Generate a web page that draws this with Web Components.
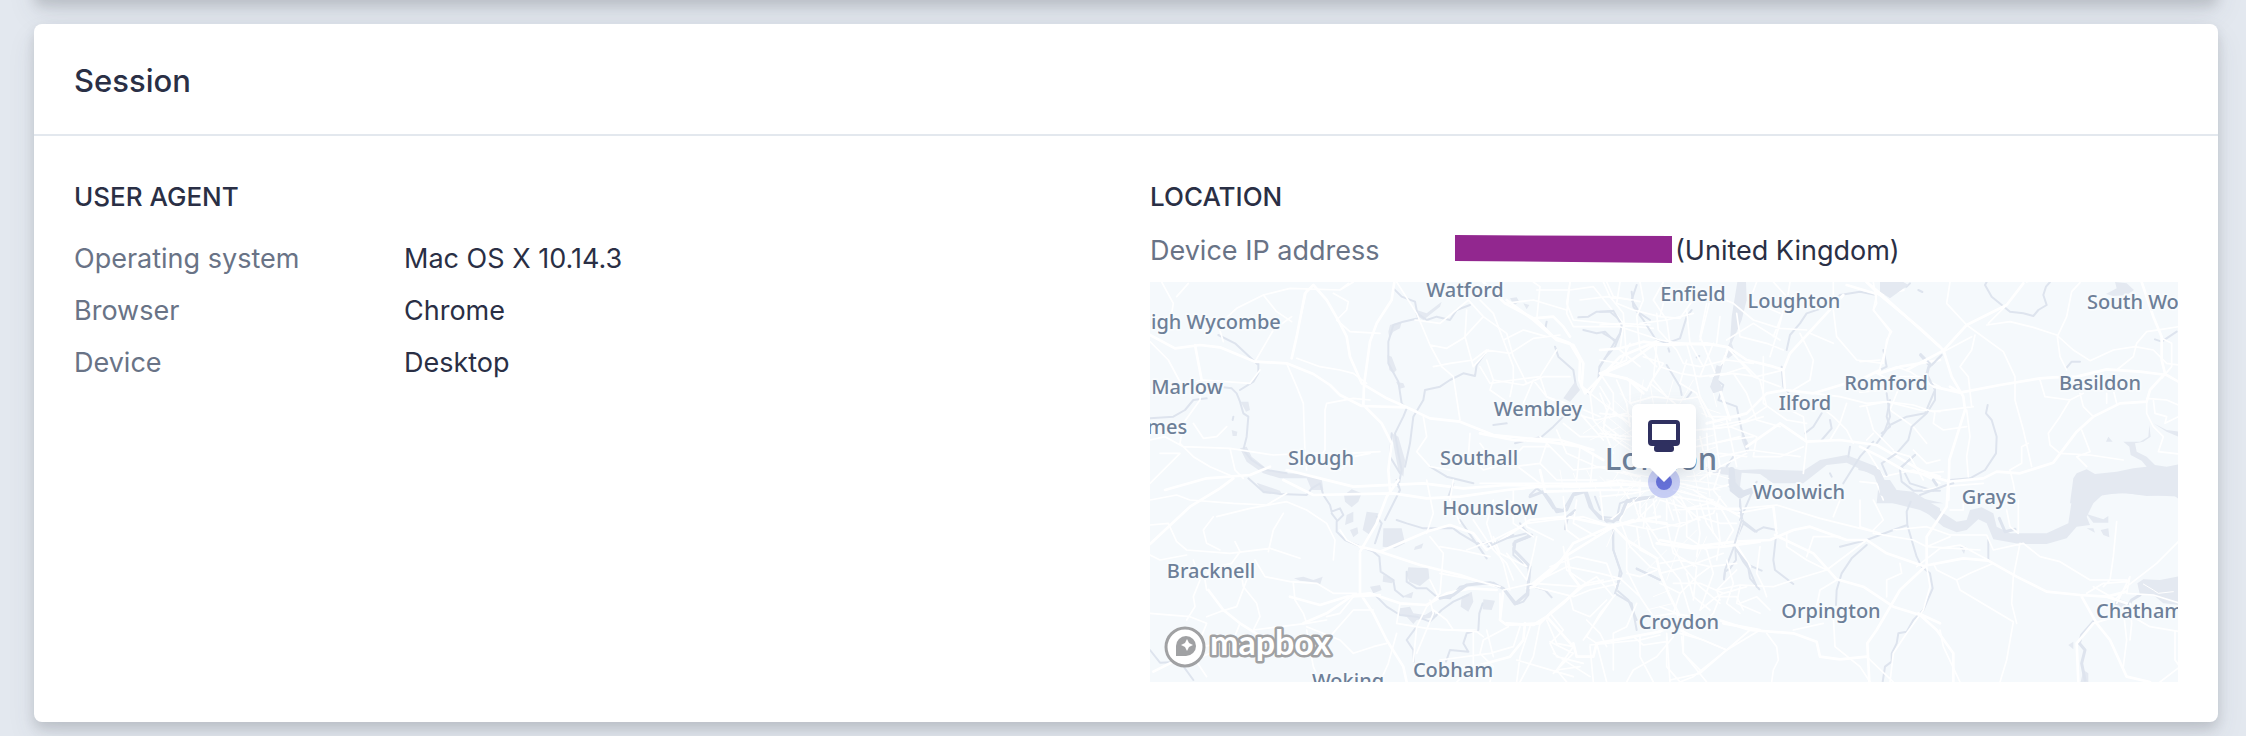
<!DOCTYPE html>
<html lang="en">
<head>
<meta charset="utf-8">
<title>Session</title>
<style>
  html { background: #e3e8ef; }
  body {
    margin: 0;
    min-height: 100vh;
    box-sizing: border-box;
    padding: 0 28px 14px 34px;
    overflow: hidden;
    background: #e3e8ef;
    color: #2a2f45;
    font-family: Inter, "Liberation Sans", sans-serif;
    font-size: 27px;
  }
</style>
</head>
<body>
<panel-card class="previous" tail></panel-card>
<panel-card>
  <h2 slot="title">Session</h2>
  <detail-section heading="User agent">
    <detail-row label="Operating system">Mac OS X 10.14.3</detail-row>
    <detail-row label="Browser">Chrome</detail-row>
    <detail-row label="Device">Desktop</detail-row>
  </detail-section>
  <detail-section heading="Location" compact>
    <detail-row label="Device IP address"><redacted-value></redacted-value>(United Kingdom)</detail-row>
    <location-map slot="media"></location-map>
  </detail-section>
</panel-card>

<script>
function define(name, html, setup) {
  const template = document.createElement('template');
  template.innerHTML = html;
  customElements.define(name, class extends HTMLElement {
    constructor() {
      super();
      this.attachShadow({ mode: 'open' }).append(template.content.cloneNode(true));
    }
    connectedCallback() {
      if (setup) setup(this, this.shadowRoot);
    }
  });
}

define('panel-card', `
<style>
  :host {
    display: block;
    background: #fff;
    border-radius: 8px;
    box-shadow: 0 14px 28px rgba(60, 66, 87, .1), 0 6px 12px rgba(0, 0, 0, .12);
  }
  /* Foot of the card scrolled out above the window */
  :host([tail]) { height: 80px; margin: -80px 0 24px; }
  :host([tail]) > * { display: none; }
  header { padding: 37px 40px 33px; border-bottom: 2px solid #e3e8ee; }
  ::slotted(h2) { margin: 0; font-size: 31px; line-height: 40px; font-weight: 500; }
  .body {
    display: grid;
    grid-template-columns: repeat(2, minmax(0, 1fr));
    gap: 48px;
    padding: 41px 40px 40px;
  }
</style>
<header><slot name="title"></slot></header>
<div class="body"><slot></slot></div>`);

define('detail-section', `
<style>
  :host { display: block; --label-width: 330px; --row-height: 52px; }
  :host([compact]) { --label-width: 304px; --row-height: 40px; }
  h3 {
    margin: 0 0 16px;
    font-size: 26px;
    line-height: 40px;
    font-weight: 500;
    text-transform: uppercase;
  }
  :host([compact]) h3 { margin-bottom: 14px; }
  dl { margin: 0; }
  ::slotted([slot="media"]) { margin-top: 11px; }
</style>
<h3></h3>
<dl><slot></slot></dl>
<slot name="media"></slot>`, (host, root) => {
  root.querySelector('h3').textContent = host.getAttribute('heading');
});

define('detail-row', `
<style>
  :host { display: flex; line-height: var(--row-height); }
  dt { flex: none; width: var(--label-width); color: #697386; }
  dd { margin: 0; display: flex; align-items: center; white-space: nowrap; }
</style>
<dt></dt>
<dd><slot></slot></dd>`, (host, root) => {
  root.querySelector('dt').textContent = host.getAttribute('label');
});

define('redacted-value', `
<style>
  :host { display: block; width: 219px; height: 28px; margin: 0 2px 4px 0; }
  svg { display: block; width: 100%; height: 100%; }
</style>
<svg viewBox="0 0 220 28" aria-hidden="true"><path fill="#92278f" d="M1 0 219 1V28L1 26Z"/></svg>`);

define('location-map', `
<style>
  :host { display: block; height: 400px; background: #f5f9fc; overflow: hidden; }
  svg { display: block; width: 100%; height: 100%; }
  .area { fill: #e4e9f1; stroke: none; }
  .river, .minor, .major, .fine { fill: none; stroke-linejoin: round; stroke-linecap: round; }
  .river { stroke: #dee4ee; stroke-width: 6; }
  .fine { stroke: #fff; stroke-width: 3; }
  .minor { stroke: #fff; stroke-width: 5; }
  .major { stroke: #fff; stroke-width: 8; }
  .places text {
    font: 500 20px "Noto Sans", "Open Sans", sans-serif;
    fill: #6d7f98;
    stroke: #f8fbfd;
    stroke-width: 4px;
    stroke-linejoin: round;
    paint-order: stroke;
  }
  .places .city { font-size: 31px; }
  .places .mid { text-anchor: middle; }
  .brand { font: 700 34px Lato, sans-serif; fill: #fff; stroke: #a0a1a3; stroke-width: 5px; stroke-linejoin: round; paint-order: stroke; }
  .bubble { filter: drop-shadow(0 4px 8px rgba(60, 66, 87, .14)); }
</style>
<svg viewBox="0 0 1028 400" preserveAspectRatio="xMidYMid slice" role="group" aria-label="Map of London">
  <svg width="1028" height="400" viewBox="0 0 3084 1200" aria-hidden="true">
    <!-- North-west: Wycombe, Slough, Watford -->
    <g transform="translate(-30 -36)">
      <path class="area" d="M742 255 755 260 770 300 760 310 748 300ZM768 335 790 340 795 352 780 356ZM745 185 750 165 785 155 780 175 760 185 748 205ZM1110 85 1130 82 1138 95 1122 106ZM275 480 292 485 290 498 278 498ZM830 120 860 130 905 95 900 110 850 150 835 140ZM302 395 325 395 330 420 318 425ZM300 535 320 530 335 560 385 600 440 610 500 612 545 625 550 660 515 660 500 625 420 625 370 610 320 575ZM1150 100 1168 105 1160 118ZM755 490 775 500 795 570 790 620 775 600 765 550Z"/>
      <path class="river" d="M760 55 785 80 825 95 832 130 860 150 890 140 930 150 950 120 990 105M830 130 835 145 790 155 760 165 745 215 745 280 775 335 785 400 800 415 790 440 765 490 775 550 785 600 775 650M850 390 820 440 810 520 795 590M850 390 855 360 900 350 930 330 970 310 1005 318 1010 285 1035 250M30 445 100 440 135 420 160 390 200 385M250 352 275 355 290 370 300 395 310 430 325 440 320 500 310 540 335 570 380 600 440 610M355 280 355 310 340 335 300 360M235 195 285 220 355 285M1315 142 1345 140 1370 125 1410 125 1440 150 1445 180 1425 230 1395 265 1378 290 1375 330 1345 370M1330 180 1370 190 1395 185 1425 215M1245 230 1255 260 1300 300 1308 350M1220 155 1215 180M1490 45 1475 90 1500 130 1530 150M755 490 750 560 780 610M1060 465 1100 460M1125 520 1205 500 1240 470 1270 440M280 440 278 450M870 590 920 620 1000 640"/>
      <path class="major" d="M763 36 755 90 710 160 690 215 672 345 670 405M30 195 105 235 180 225 240 232 345 275 440 280 520 312 570 345 600 375 665 408 800 412 870 445 960 455 1060 495 1160 505 1260 510 1360 540M455 265 470 200 495 70 520 45 560 90 600 160 620 200 630 260 665 340 740 385 830 425M75 660 200 625 330 615 390 590M1030 36 1095 100 1190 150 1240 200 1290 220 1320 270 1318 330 1335 370 1440 260 1560 210M670 405 725 460 755 520 745 600 750 660M440 600 540 625 640 650 850 640 970 655 1100 645 1300 650 1560 640M165 225 185 330"/>
      <path class="minor" d="M65 36 100 100 95 130M250 215 235 165 290 115 370 75 450 55 600 60 625 40M370 75 410 125 455 155M110 80 145 40M580 70 625 95 620 120 590 150 630 185 720 190M30 215 85 270 125 345 190 330 330 340 360 300M185 330 180 390 130 460 120 520 160 560 210 590 280 620M160 460 190 505 230 500 260 470M30 510 75 500 130 530 270 535 400 555 500 550 620 550 720 545M270 535 285 600 310 625M440 280 470 350 490 400 495 550 500 600M555 420 560 400 640 385 690 390M555 420 555 540 520 590M470 265 540 290 600 300 640 310 680 340M345 275 400 180 455 140M770 36 830 130 870 225 905 290 940 320 960 450M825 150 900 160 985 90 1030 140 1100 190 1120 260 1160 340M870 225 920 235 970 205 1030 140M880 290 930 280 1000 270 1040 240 1110 250M980 120 975 200 1000 290 1045 240M1040 270 1060 330 1050 360 1100 395M1060 330 1150 345 1210 320 1290 320M1110 250 1180 205 1260 195M1190 150 1200 50 1180 36M1290 36 1280 100 1300 150 1400 160 1540 175M1190 60 1290 60 1360 50 1400 100 1450 160 1440 240 1500 290M1095 100 1180 90 1280 120M1150 400 1180 330 1220 380 1310 410 1380 440M1380 370 1400 420 1390 480 1440 520 1500 560M850 440 860 500 830 545 870 590 930 600M990 490 985 560 1030 600 1100 580 1150 530 1230 530M1020 520 1050 560 1120 580 1200 640M640 36 600 60M500 60 480 150M1400 36 1420 80 1500 95M60 550 120 550 30 640M600 600 640 560 690 550M1200 500 1260 560 1300 600 1400 590 1500 620"/>
    </g>
    <!-- South-west: Windsor, Bracknell, Woking, Heathrow -->
    <g transform="translate(-30 594)">
      <path class="area" d="M612 45 635 28 665 40 655 65 635 82 615 65ZM680 95 715 100 700 150 690 165 668 150ZM730 145 785 145 795 190 765 205 728 200ZM805 262 865 265 868 295 840 318 808 305 800 285ZM965 350 995 335 1000 365 985 395 962 380ZM1030 358 1065 362 1055 390 1028 388ZM462 295 490 290 520 300 548 290 540 315 510 305 480 302ZM620 105 640 95 640 125 615 135ZM630 150 652 142 655 160 640 172ZM780 385 810 380 820 400 855 405 880 390 890 410 830 420 820 432 800 410 775 405ZM690 320 720 315 725 330 700 340ZM730 285 765 300 755 310 728 305ZM825 200 850 190 845 205 822 210ZM350 8 420 32 425 42 370 40ZM785 350 820 335 815 355Z"/>
      <path class="river" d="M325 -5 370 35 420 42 500 45 515 25 540 10 550 45 570 75 575 95 600 85 610 105 590 125 590 155 615 180 650 195 700 215 718 230 722 275 760 300 765 330 790 350M575 100 590 120M800 275 800 305 830 325 860 325 890 350 930 355 960 320 1010 310 1060 308 1095 330 1130 372 1150 365 1165 345 1168 290 1165 265 1120 225 1120 190 1170 170 1140 130M1165 315 1215 330 1235 352M770 120 800 130 850 145 940 145 960 160 1010 190 1060 190 1120 165M710 110 725 130 705 190M710 350 740 380 780 405 830 410 870 425 905 390 940 365 985 345M1028 370 1018 400 1015 450 980 460 970 490 985 515 930 510 918 545M830 440 800 480 820 510 822 545M1170 45 1190 25 1210 40 1240 85 1270 90 1300 40 1340 35 1360 90 1400 125 1435 120 1460 60 1530 50M1275 145 1285 110 1305 95M1418 160 1420 210 1440 270 1430 330 1465 360 1490 420M1490 265 1560 300M30 510 60 548 120 545 160 600M770 0 780 30 735 120M940 10 925 50M960 120 1040 235M1380 90 1365 50"/>
      <path class="major" d="M30 192 150 80 240 25 280 -5M660 220 660 340 700 400 740 480 790 560 800 606M660 215 710 130 740 50 775 0M660 200 720 215 840 255 960 285 1020 305 1090 325M450 350 540 375 620 350 720 345M490 430 560 400 640 345 690 340 780 370 860 375 920 340 990 325 1070 330M430 0 520 45 760 40 860 55 960 50 1100 30 1200 20 1400 10 1560 20M720 215 860 155 930 135 1000 160 1040 210 1170 120 1280 110 1420 140M1160 325 1180 320 1250 260 1300 190 1420 135 1560 110M205 330 250 390 300 430 380 480M1090 330 1080 420 1100 435 1200 430 1230 400 1290 350 1340 310M190 500 40 575M1000 560 1110 530 1150 480 1155 430"/>
      <path class="minor" d="M30 60 110 45 150 60 280 70 380 75 440 40M30 135 85 130 110 185 140 210 270 220 390 205 480 235M220 110 190 150 200 190 240 210M230 110 330 85 440 65 500 90 560 130 585 180 580 240M430 100 400 150 385 215M30 225 60 240 140 225M285 185 300 215 275 250 210 265 195 300 200 330M345 240 375 290 450 305 530 310 580 340 650 340M160 240 180 300 160 350 165 380 140 420M300 255 310 320 350 370 360 410 340 450M460 310 465 360 490 400 500 430M30 400 150 410 200 430M200 410 240 395 290 380 320 300M200 430 160 530 200 590M160 540 260 500 380 475 500 480 560 500M340 450 500 430 560 420M500 450 520 560 540 606M640 520 600 480 500 440M640 520 700 500 740 490M700 390 640 390 570 470M770 430 860 445 1010 455 1030 470M770 430 780 370M770 460 745 550 720 606M880 390 920 420 940 450M820 545 830 440 860 380 900 340 910 220 870 170M640 350 600 400 560 410M870 360 880 400 830 520M1000 455 1000 560 950 606M1105 440 1030 480 1020 520 1060 560 1050 606M870 300 895 350M900 200 960 210 1050 230M1120 200 1160 260 1080 220 1060 170M1060 60 1040 130 1060 190 1090 250 1110 330M1100 60 1150 80 1160 140 1240 180M1270 200 1280 270 1340 310 1390 300M1310 60 1300 130 1370 170 1420 140M1230 260 1310 230 1400 250 1430 330M1180 320 1300 350 1350 330 1440 310M1290 350 1300 390 1350 410 1400 360M1230 400 1270 450 1230 490 1250 530 1330 550M1200 430 1180 530 1140 606M1350 500 1360 606M1350 495 1500 480 1560 465M1340 420 1380 460 1400 500M600 150 620 180 660 200M860 0 880 100 860 160M940 0 930 60 960 130M1430 0 1470 60 1440 120 1470 200 1530 260 1560 270M1500 0 1500 100 1560 190M1440 130 1540 150M1240 520 1350 590M300 430 280 480 190 500"/>
    </g>
    <!-- North-east: Enfield, Romford, Thames -->
    <g transform="translate(1350 -36)">
      <path class="area" d="M412 36 438 36 440 90 425 150 395 220 405 250 385 265 372 255 390 215 395 140ZM350 285 362 290 350 330 345 370 332 350ZM320 590 385 592 420 600 480 598 610 602 660 570 740 555 830 590 845 660 880 665 960 680 1020 715 1020 750 960 720 840 690 830 620 740 578 680 585 610 640 520 640 480 612 425 608 420 650 440 668 420 680 385 650 385 615 320 608ZM425 480 445 520 440 550 425 510Z"/>
      <path class="river" d="M95 65 100 110 130 150 165 205 200 220 240 205 260 140 275 120M0 125 40 122 65 165 60 190 30 240 0 290M10 190 45 210M205 235 208 245M200 285 240 350 245 375M275 365 260 385M290 262 298 258M350 330 370 345 355 390 410 410 425 480 445 540M560 240 570 195 600 160 620 130 680 110 720 75 780 65 830 75 880 70 890 45 920 50 930 40M960 255 990 290 1020 260M830 520 870 465 920 440 975 430 1005 360 980 310 985 290M850 240 860 290 830 305M665 430 640 470 615 490M690 450 695 475 665 510M870 390 860 440 870 470 845 490M545 290 550 350 570 375M820 515 780 560 730 640M945 555 905 590 930 640 1000 662M690 610 695 620M0 740 50 745 60 700 100 685 160 680M470 635 420 750M400 560 380 590M750 530 745 560"/>
      <path class="major" d="M0 240 60 235 130 215 200 225 320 220 385 232 440 270 520 290 550 300 555 360 640 370 740 340M550 300 570 250 680 130 730 75M740 45 840 75 960 175 1020 230M800 36 840 75 910 60M840 310 900 290 1020 270M440 530 540 460 620 515 720 510 830 525 900 565 960 600 1020 620M385 232 350 330 390 450M555 360 500 370 440 430 320 460M840 300 780 330 740 345M0 310 80 325 130 370"/>
      <path class="minor" d="M60 36 50 100 100 120 180 140 240 145 300 60 400 100 460 150 540 175 620 180M520 36 560 80 540 160 510 260M570 36 560 100 520 200M700 36 700 120 710 200 770 270 850 280 860 210 875 185 820 120 830 75M600 190 640 270 630 330 580 360M630 190 700 220M170 130 175 180 230 240 250 280 300 290 380 270 460 280M260 120 270 220 310 290M320 100 300 200 350 320M360 140 350 220M410 130 420 200 500 220 550 240M330 320 400 310 470 320 550 300M400 310 440 370 470 450 540 470M490 260 490 400 560 450 620 460M560 370 570 420 610 440 620 520 610 610M640 370 720 380 800 400 860 395 960 420 1020 425M660 410 700 440 740 480 760 520M740 400 720 460 690 510M830 310 900 345 870 420 940 470 980 520M120 36 130 90 110 140 120 240 170 290M200 60 180 140M0 165 65 160 150 165M0 270 60 280 90 220M130 260 190 280 150 340 200 380M260 270 240 340 290 370 320 440M300 380 330 440 420 440M310 480 390 470 470 500 460 560 540 560 610 530M340 520 420 500M360 560 450 540 600 560M300 500 320 590M940 540 980 580 1020 570M900 320 960 320 1020 350M470 36 450 90 540 130M800 540 850 620 940 600 1020 640M0 640 60 630 140 640M0 680 100 670 150 660M30 750 100 700 170 680M110 750 170 690M200 750 200 690M300 750 220 680 350 700 420 740M240 640 330 660 400 640M0 350 30 400 10 460 60 500M50 330 80 400 90 470M0 430 100 440M0 490 90 500"/>
    </g>
    <!-- East: Basildon, Grays, Thames estuary -->
    <g transform="translate(2130 -36)">
      <path class="area" d="M765 36 800 40 822 60 800 75 760 78 738 72 770 55ZM790 515 840 515 865 500 868 465 872 500 850 515 825 520 830 545 860 560 885 585 920 590 960 582 960 680 850 675 780 668 700 680 690 700 630 700 640 625 650 610 680 598 705 612 770 605 820 595 860 590 845 572 812 555 808 530ZM738 515 745 500 758 515ZM880 460 920 480 955 485 955 500 920 485ZM-5 572 60 600 85 655 130 665 165 680 250 700 50 700 55 650 40 610 -5 600ZM60 36 130 36 145 45 90 85 60 65Z"/>
      <path class="river" d="M375 45 395 80 450 125 490 130 520 138 535 120 560 105 550 75 558 50 570 36M182 252 210 280 200 320 225 355 225 390 200 430 155 470 145 510 110 550 65 580M245 255 215 285M80 370 90 440 75 480M383 405 378 430 395 450 410 500 408 550 375 600 330 625 270 630M120 600 125 635 160 662 240 662M618 295 635 275 660 275M165 555 120 595M885 208 905 215 950 185M65 580 80 615M175 60 187 66M380 36 375 45"/>
      <path class="major" d="M20 36 60 70 150 150 250 240 275 320 310 380 315 420 290 500 268 570 265 690M60 360 0 365M140 300 250 242 320 165 440 105 490 40M270 350 300 368 420 345 540 325 580 322 650 320 740 298 840 305 920 315 955 335M845 36 880 140 905 200 905 270 915 310 870 360 860 395 780 400 700 440 650 485 580 578 480 610 410 605 370 625 270 635 190 612 130 600 60 560 0 530M220 350 300 368"/>
      <path class="minor" d="M270 36 260 100 320 165 430 245 465 320 465 390 490 480 515 590M380 165 450 155 520 172 590 195 640 240 690 272 760 240 825 230 880 240 920 280 955 285M660 38 635 65 620 140 592 200 600 260 620 300M440 105 385 160M590 0 500 36M345 195 335 240 300 290 325 320 335 410M335 200 250 245M540 330 555 380 630 390 670 370M630 390 600 440 565 490 570 525 600 550 690 555 790 570M660 370 670 410 700 440M665 480 690 545 650 560 680 590M740 370 740 400M760 360 770 400M770 300 820 260 830 220 860 185 905 178 955 170M905 205 935 220 935 290 905 325M860 395 860 430 880 470 910 500 895 545 955 552M880 390 885 430 920 440 915 460 955 440M860 385 920 390 955 405M505 520 485 530 485 580 450 600 460 640M320 420 330 500 320 560 325 620M225 425 220 460 250 480 320 470M0 410 80 395 160 405 220 425 340 410M20 410 40 480 100 540M40 36 50 100 40 120 90 185 70 260 55 310M0 275 60 270M55 310 110 290 150 305 220 350M40 490 20 510M100 545 150 560 190 630M190 660 250 650 370 640M460 640 470 700M180 612 250 605M0 635 50 640 70 690"/>
    </g>
    <!-- South-east: Orpington, Dartford, Chatham -->
    <g transform="translate(1530 594)">
      <path class="area" d="M655 0 690 0 710 30 760 35 800 60 850 100 890 125 920 120 930 90 965 82 1000 100 1010 140 1050 160 1160 160 1225 130 1240 30 1250 0 1560 0 1560 60 1540 45 1460 48 1400 40 1330 42 1300 70 1280 110 1290 135 1250 140 1220 175 1160 192 1080 192 1000 178 980 130 955 118 920 150 890 157 850 140 790 90 740 60 690 60 660 45ZM1280 102 1330 118 1345 108 1345 128 1300 128ZM1322 150 1345 145 1348 172 1330 165ZM1280 145 1300 145 1305 158ZM900 200 918 200 912 222 905 210ZM1432 310 1450 298 1500 300 1560 288 1560 375 1510 370 1480 345 1440 345ZM1225 495 1240 485 1240 508ZM320 -2 380 -2 365 8 340 8ZM1370 355 1400 365 1390 390 1360 380ZM1270 570 1285 580 1285 606 1262 606Z"/>
      <path class="fine" d="M1450 312 1480 330 1495 340 1540 335"/>
      <path class="river" style="stroke-width:12" d="M212 0 215 30 240 50 265 35"/>
      <path class="river" style="stroke-width:9" d="M1300 425 1265 465 1258 490 1275 510 1265 550 1275 600M1018 115 1035 155 1065 148M820 0 830 15M1440 345 1415 360 1400 385"/>
      <path class="river" d="M240 60 240 90 250 130 225 185 228 240 210 265 195 275 192 298M250 130 285 155 310 142 350 150 345 195 340 240 345 270 400 312M228 205 250 245 265 265 270 295 298 328M265 255 305 272M752 65 740 95 742 135 700 150 660 165 620 180 540 200M742 135 755 180 770 230 785 260 810 280 818 325 790 390 760 420 740 455 715 460 710 490 695 520 695 545 675 560 668 606M620 195 575 235 545 280 530 330 528 375M985 180 985 240M780 45 860 15 880 10"/>
      <path class="major" d="M865 0 860 80 800 170 800 255 720 330 650 450 622 490 628 606M160 415 270 450 400 460 470 485 480 530 540 538 620 530M0 180 100 200 225 185 330 180 400 150 450 140 560 180 620 180 680 220 790 258 910 235 985 242 1070 290 1160 335 1260 345 1340 350 1400 370M345 165 460 220 530 298 610 320 700 380 780 405 830 450 880 520 880 606M245 120 225 190 270 260M340 80 350 160M775 400 840 430M1255 606 1250 490 1300 430M1265 350 1310 430 1350 480 1400 590 1470 606M1340 350 1400 335"/>
      <path class="minor" d="M80 85 250 85 350 75 480 115 640 155M0 60 80 85 150 70 230 100 340 80M640 160 760 180 800 200 960 210M700 150 800 140 870 165 980 165 1000 210 1090 190 1140 230 1200 245 1290 300 1400 300M800 200 870 170M770 260 840 205 900 195 985 240M1370 125 1360 230 1350 300 1330 320M1560 180 1490 250 1400 320 1370 355M1000 250 930 280 890 300 830 270 820 250M890 300 900 330 1060 425 1040 540 1020 606M1080 190 1060 290 1055 370 1070 430M690 606 700 520 740 460 790 390 810 320 800 260M520 410 525 500 600 560 630 606M490 430 400 450M620 530 700 606M840 450 850 500 900 606M380 160 380 200 440 240 500 270 620 180M440 230 460 170 540 170M500 270 400 300 340 320 240 315 170 330M530 300 480 330 470 380M720 250 725 280 680 300 680 350M60 460 130 480 200 510 270 450M200 510 120 580 30 600M320 460 350 500 355 540 340 570 335 606M20 470 20 560 60 606M65 470 70 520 140 606M130 430 160 400 180 350 230 350 250 390M0 250 60 240 150 260 230 250M0 130 60 140 120 110 180 130 230 130M40 60 60 130 40 200 70 260 120 320 180 370M110 90 120 160 110 230M170 100 180 180 170 240M140 60 160 160M0 310 60 340 40 400M60 340 110 290 150 260M80 280 100 350 150 390M180 360 170 330 230 270M240 370 290 350 330 390M320 350 310 320M300 200 290 280 310 320M600 60 600 140 660 160M540 60 520 110M640 60 670 120 640 150M1040 90 1050 140 1075 160 1075 60M870 90 910 90 910 70M1300 430 1400 400 1470 440 1560 455M1545 455 1545 540 1560 560 1500 606M1390 390 1400 480 1390 560M1410 370 1415 430 1410 480M1400 340 1480 345 1560 370M1280 340 1330 310 1400 305M1300 320 1370 360M1370 370 1410 290 1400 340M0 380 50 400 60 440"/>
    </g>
    <!-- Inner London -->
    <g transform="translate(990 -6)">
      <path class="area" d="M250 355 285 305 300 330 270 365ZM690 320 710 270 730 250 715 300 730 330 700 340Z"/>
      <path class="major" d="M80 60 160 120 230 180 280 195 310 250 305 320 330 340 370 280 440 250 520 195 600 190 710 195M0 460 100 480 200 485 300 500 370 540M160 115 220 110 250 140 270 170M380 280 450 300 500 330"/>
      <path class="minor" d="M0 60 40 100 70 180 100 260 100 300 90 350M70 180 130 150 200 170M100 300 180 290 230 210M180 290 200 350 300 400 370 480M100 300 30 310 0 260M270 6 260 100 280 140 420 140 540 180 600 190M370 6 390 50 430 100 440 240M300 60 380 50 460 60M440 240 400 260 360 280 400 340 400 400 450 430M450 300 450 370 520 350 600 360 660 350M480 130 560 120 640 100M520 190 540 260 600 280 660 290 740 280 800 260M530 195 520 300 560 350 620 400M500 330 540 260M570 190 560 120 520 60 550 6M620 190 640 260 660 350 700 420M660 180 690 60M700 190 660 290M740 200 820 290 900 320M740 180 820 130 900 180M780 240 840 300 860 380 800 420 700 440M330 340 340 420 380 470 400 520M330 340 450 430M280 400 350 420 440 400M250 430 300 470 380 470 450 480M230 450 260 520 350 560 450 580M200 490 180 550 230 600 350 600M0 550 100 560 180 550M300 500 290 600M340 520 330 620M0 610 200 610 500 610M650 450 750 440 850 410M650 500 750 480 820 470M650 540 720 520 800 530M700 430 720 560M740 420 770 560M680 460 690 590M660 600 720 560 800 520"/>
      <path class="fine" d="M380 370 450 440M400 360 455 410M370 400 455 470M420 340 460 380M360 440 455 500M440 470 380 520M455 520 400 600M470 590 380 570M500 610 420 630M640 600 740 620M620 620 720 630M660 570 760 600M660 380 720 400M665 400 730 430M480 370 490 300M520 370 510 310M560 370 580 300M600 370 640 300M330 480 420 440M310 460 400 400M480 585 440 630M640 590 690 560M650 480 700 465M655 520 710 500M710 380 700 340M455 450 400 480"/>
    </g>
    <!-- South London: Richmond, Wimbledon, Croydon -->
    <g transform="translate(870 564)">
      <path class="river" style="stroke-width:9" d="M270 80 310 65 330 90 350 125 380 120 400 75 435 65 450 110 480 145 520 155 545 130 560 95 640 80M0 385 40 375 80 345 150 338 190 355 225 402 262 370 270 290 222 240 225 215 275 195"/>
      <path class="river" style="stroke-width:18" d="M875 0 878 40 905 72 940 60"/>
      <path class="river" d="M590 297 630 315 655 327M375 178 380 140 405 120M520 180 520 240 545 310 525 370 575 400 590 480M900 90 905 150 880 235 855 300 852 328M145 230 200 205 260 190M905 150 950 185M890 240 920 280 950 350"/>
      <path class="major" d="M300 0 315 65 480 60 600 60M520 170 600 150 680 160M520 170 560 210 650 265 660 310 690 380 720 440M650 220 760 235 850 230 960 215M280 340 390 250 520 170 580 150M380 250 390 310 420 350 370 400 320 440M400 520 410 560 460 560 470 520 580 500 660 485 740 440M400 530 320 440 280 465 200 460M740 490 700 470 640 490M850 460 960 480"/>
      <path class="minor" d="M260 160 340 150 430 140 520 170M280 340 420 350 470 340 545 325M300 330 380 290 480 310 540 325M420 350 470 320 520 380 430 510M525 375 480 430 440 500 470 520M590 400 560 470 520 490 520 600M540 325 600 380 640 440M560 210 560 300 600 380M590 170 600 240 650 265M620 170 640 230 720 330 750 430M660 310 740 290 850 250M700 340 780 340 850 370 920 350M680 160 700 250 770 290 760 390M740 120 740 200 800 240 820 310 780 420M780 100 800 160 850 230M840 80 820 130 760 150 640 180M700 120 800 115 900 120M680 90 700 150M620 100 610 170M640 90 650 160M580 90 600 150M720 80 760 150M760 60 840 110 880 180 850 230M860 270 880 340 860 400 900 430M700 500 650 560 580 600 560 636M680 490 690 636M730 480 730 550 780 600M740 490 860 540 960 480M860 540 760 620 720 636M580 500 610 525 680 515M400 530 350 600 380 636M330 515 400 550 340 610M350 600 420 590M240 470 220 530 150 550 0 570M0 480 110 480M140 480 160 560M270 470 240 560 230 636M230 570 400 620M180 370 180 450 200 465M190 360 280 340M320 450 350 520 400 530M470 520 500 636M600 500 600 560 640 636M0 310 80 325 180 350M80 240 160 210 260 160M370 80 380 180 420 210M480 60 490 150M840 0 820 60 860 110M700 60 820 90M220 60 220 160 280 200M200 250 260 330 280 250 290 200M100 150 160 240 200 280 220 330M650 300 600 320 560 310M640 440 700 430 760 440M780 420 830 380 850 370M900 350 890 400 960 430"/>
      <path class="fine" d="M620 60 560 110M630 80 590 130M660 90 640 130M690 85 720 130M710 70 770 110M720 50 800 70M720 30 830 40M620 40 500 30M625 20 500 0M600 30 540 90M550 30 530 80M720 60 840 100M740 20 840 10M760 0 780 90M800 0 810 80M560 0 600 60M480 20 520 60M440 0 470 60M400 10 420 60M360 0 370 60M530 160 500 230M600 200 560 240M680 240 620 300M720 220 680 330M770 180 720 230M800 200 760 290M700 400 620 420M690 360 640 380"/>
    </g>
  </svg>

  <g class="places">
    <text x="1" y="47">igh Wycombe</text>
    <text class="mid" x="37" y="112">Marlow</text>
    <text x="-3" y="152">mes</text>
    <text class="mid" x="315" y="15">Watford</text>
    <text class="mid" x="388" y="134">Wembley</text>
    <text class="mid" x="171" y="183">Slough</text>
    <text class="mid" x="329" y="183">Southall</text>
    <text class="mid city" x="511" y="188">London</text>
    <text class="mid" x="340" y="233">Hounslow</text>
    <text class="mid" x="61" y="296">Bracknell</text>
    <text class="mid" x="198" y="406">Woking</text>
    <text class="mid" x="303" y="395">Cobham</text>
    <text class="mid" x="529" y="347">Croydon</text>
    <text class="mid" x="543" y="19">Enfield</text>
    <text class="mid" x="644" y="26">Loughton</text>
    <text class="mid" x="736" y="108">Romford</text>
    <text class="mid" x="655" y="128">Ilford</text>
    <text class="mid" x="649" y="217">Woolwich</text>
    <text x="937" y="27">South Wo</text>
    <text class="mid" x="950" y="108">Basildon</text>
    <text class="mid" x="839" y="222">Grays</text>
    <text class="mid" x="681" y="336">Orpington</text>
    <text x="946" y="336">Chatham</text>
  </g>

  <a href="https://www.mapbox.com/" aria-label="mapbox">
    <circle cx="35" cy="365" r="19" fill="#fff" stroke="#a0a1a3" stroke-width="3"/>
    <path fill="#a0a1a3" d="M26 374V364A10 10 0 0 1 36 354 10 10 0 0 1 46 364 10 10 0 0 1 36 374Z"/>
    <path fill="#fff" d="M37 357 39 361 43 363 39 365 37 369 35 365 31 363 35 361Z"/>
    <text class="brand" x="60" y="373">mapbox</text>
  </a>

  <g aria-hidden="true">
    <circle cx="514" cy="200" r="16" fill="#6772e5" opacity=".32"/>
    <circle cx="514" cy="200" r="8" fill="#6772dc"/>
    <path class="bubble" fill="#fff" d="M488 122H540A6 6 0 0 1 546 128V180A6 6 0 0 1 540 186H528L514 200 500 186H488A6 6 0 0 1 482 180V128A6 6 0 0 1 488 122Z"/>
    <rect x="500" y="140" width="28" height="22" rx="2" fill="#fff" stroke="#2f3060" stroke-width="4"/>
    <path fill="#2f3060" d="M500 158H528V163H500ZM507 163H521A3 3 0 0 1 524 166V167A3 3 0 0 1 521 170H507A3 3 0 0 1 504 167V166A3 3 0 0 1 507 163Z"/>
  </g>
</svg>`);
</script>
</body>
</html>
